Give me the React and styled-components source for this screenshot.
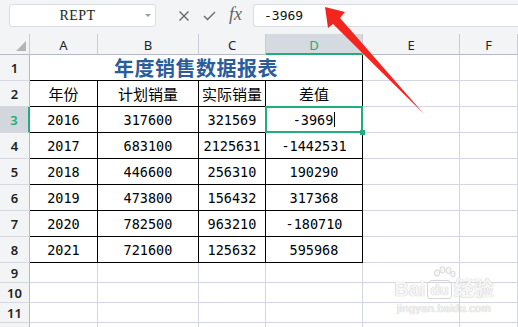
import React from "react";
import styled, { createGlobalStyle, css } from "styled-components";

const GlobalStyle = createGlobalStyle`
  html, body {
    margin: 0;
    padding: 0;
    background: #ffffff;
    overflow: hidden;
  }
`;

const Window = styled.div`
  position: relative;
  width: 518px;
  height: 327px;
  overflow: hidden;
  background: #ffffff;
  font-family: "DejaVu Sans Mono", "Noto Sans CJK SC", monospace;
`;

const Toolbar = styled.div`
  height: 34px;
  display: flex;
  align-items: flex-start;
  padding-top: 4px;
  box-sizing: border-box;
  background: #f3f4f6;
`;

const NameBox = styled.div`
  width: 147px;
  height: 23px;
  margin-left: 9px;
  box-sizing: border-box;
  border: 1px solid #dadde3;
  border-radius: 3px;
  background: #ffffff;
  display: flex;
  align-items: center;
`;

const NameText = styled.span`
  flex: 1;
  text-align: center;
  font-family: "Liberation Serif", "DejaVu Serif", serif;
  font-size: 14px;
  color: #222;
  letter-spacing: 0.5px;
`;

const Caret = styled.span`
  width: 0;
  height: 0;
  margin-right: 4px;
  border-left: 3px solid transparent;
  border-right: 3px solid transparent;
  border-top: 3px solid #9a9da5;
`;

const Actions = styled.div`
  width: 97px;
  height: 23px;
  display: flex;
  align-items: center;
  gap: 13px;
  padding-left: 22px;
  box-sizing: border-box;
`;

const Fx = styled.span`
  font-family: "Liberation Serif", "DejaVu Serif", serif;
  font-style: italic;
  font-size: 18px;
  color: #60646b;
  margin-top: -2px;
`;

const FormulaInput = styled.div`
  flex: 1;
  height: 23px;
  box-sizing: border-box;
  border: 1px solid #dadde3;
  border-right: none;
  border-radius: 3px 0 0 3px;
  background: #ffffff;
  padding-left: 10px;
  display: flex;
  align-items: center;
  font-size: 13px;
  color: #111;
`;

const Sheet = styled.div`
  display: grid;
  grid-template-columns: 30px 68px 101px 67px 97px 97px 1fr;
  grid-template-rows: 21px repeat(8, 26px) repeat(4, 20px);
`;

const Corner = styled.div`
  background: #f3f4f6;
  border-right: 1px solid #c9ccd6;
  border-bottom: 1px solid #b6bac6;
  position: relative;
  &::after {
    content: "";
    position: absolute;
    right: 3px;
    bottom: 3px;
    width: 0;
    height: 0;
    border-left: 10px solid transparent;
    border-bottom: 10px solid #b4b4b4;
  }
`;

const ColHead = styled.div`
  background: ${p => (p.active ? "#d5d9e0" : "#f3f4f6")};
  color: ${p => (p.active ? "#22ad79" : "#1f1f1f")};
  border-right: 1px solid #c9ccd6;
  border-bottom: ${p => (p.active ? "2px solid #22ad79" : "1px solid #b6bac6")};
  display: flex;
  align-items: center;
  justify-content: center;
  padding-top: 2px;
  font-family: "Noto Sans", "Liberation Sans", sans-serif;
  font-size: 13px;
  box-sizing: border-box;
`;

const RowHead = styled.div`
  background: ${p => (p.active ? "#d3d6dc" : "#f3f4f6")};
  color: ${p => (p.active ? "#22ad79" : "#1f1f1f")};
  border-right: ${p => (p.active ? "2px solid #22ad79" : "1px solid #b6bac6")};
  border-bottom: 1px solid #d6d9e3;
  display: flex;
  align-items: center;
  justify-content: center;
  font-family: "Noto Sans", "Liberation Sans", sans-serif;
  font-weight: 600;
  font-size: 13px;
  box-sizing: border-box;
`;

const Cell = styled.div`
  position: relative;
  border-right: 1px solid ${p => (p.edge ? "#000" : "#d3d6e2")};
  border-bottom: 1px solid ${p => (p.ruled ? "#000" : "#d3d6e2")};
  display: flex;
  align-items: center;
  justify-content: center;
  font-size: ${p => (p.label ? "15px" : "13.5px")};
  color: #000;
  white-space: nowrap;
  box-sizing: border-box;
  ${p =>
    p.selected &&
    css`
      &::after {
        content: "";
        position: absolute;
        left: -1px;
        top: -1px;
        right: -1px;
        bottom: -1px;
        border: 2px solid #22ad79;
      }
      &::before {
        content: "";
        position: absolute;
        right: -3px;
        bottom: -3px;
        width: 5px;
        height: 5px;
        background: #22ad79;
        z-index: 1;
      }
    `}
`;

const Title = styled(Cell)`
  grid-column: span 4;
  font-family: "Noto Sans CJK SC", sans-serif;
  font-weight: 700;
  font-size: 20px;
  color: #2b5c9c;
  letter-spacing: 0.5px;
`;

const Cursor = styled.span`
  display: inline-block;
  width: 1px;
  height: 15px;
  background: #000;
  margin-left: 1px;
`;

const Arrow = styled.svg`
  position: absolute;
  left: 0;
  top: 0;
  pointer-events: none;
`;

const Watermark = styled.div`
  position: absolute;
  left: 392px;
  top: 266px;
  width: 104px;
  display: flex;
  flex-direction: column;
  align-items: center;
  color: #f6f6f6;
  font-family: "Liberation Sans", "Noto Sans CJK SC", sans-serif;
  text-shadow: 0 0 1px #c8c8c8, 0 0 1px #c8c8c8;
  pointer-events: none;
`;

const Brand = styled.div`
  display: flex;
  align-items: flex-end;
  gap: 2px;
  font-size: 20px;
  font-weight: 700;
  line-height: 20px;
`;

const Du = styled.span`
  font-size: 15px;
  line-height: 15px;
  padding: 1px 2px;
  border: 1px solid #d6d6d6;
  border-radius: 5px 5px 3px 3px;
`;

const Site = styled.div`
  font-size: 11px;
  line-height: 13px;
  margin-top: 3px;
  letter-spacing: 0.3px;
`;

const columns = ["A", "B", "C", "D", "E", "F"];

const data = [
  ["2016", "317600", "321569", "-3969"],
  ["2017", "683100", "2125631", "-1442531"],
  ["2018", "446600", "256310", "190290"],
  ["2019", "473800", "156432", "317368"],
  ["2020", "782500", "963210", "-180710"],
  ["2021", "721600", "125632", "595968"]
];

export default function App() {
  return (
    <Window>
      <GlobalStyle />
      <Toolbar>
        <NameBox>
          <NameText>REPT</NameText>
          <Caret />
        </NameBox>
        <Actions>
          <svg width="12" height="12" viewBox="0 0 12 12">
            <path d="M1.5 1.5l9 9M10.5 1.5l-9 9" stroke="#61656c" strokeWidth="1.3" fill="none" />
          </svg>
          <svg width="13" height="10" viewBox="0 0 13 10">
            <path d="M1 5l3.5 3.5L12 1" stroke="#61656c" strokeWidth="1.3" fill="none" />
          </svg>
          <Fx>fx</Fx>
        </Actions>
        <FormulaInput>-3969</FormulaInput>
      </Toolbar>

      <Sheet>
        <Corner />
        {columns.map(c => (
          <ColHead key={c} active={c === "D"}>
            {c}
          </ColHead>
        ))}

        <RowHead>1</RowHead>
        <Title edge ruled>年度销售数据报表</Title>
        <Cell />
        <Cell />

        <RowHead>2</RowHead>
        <Cell label edge ruled>年份</Cell>
        <Cell label edge ruled>计划销量</Cell>
        <Cell label edge ruled>实际销量</Cell>
        <Cell label edge ruled>差值</Cell>
        <Cell />
        <Cell />

        {data.map((row, i) => (
          <React.Fragment key={row[0]}>
            <RowHead active={i === 0}>{i + 3}</RowHead>
            {row.map((v, j) => (
              <Cell key={j} edge ruled selected={i === 0 && j === 3}>
                {v}
                {i === 0 && j === 3 && <Cursor />}
              </Cell>
            ))}
            <Cell />
            <Cell />
          </React.Fragment>
        ))}

        {[9, 10, 11, 12].map(n => (
          <React.Fragment key={n}>
            <RowHead>{n < 12 ? n : ""}</RowHead>
            {columns.map(c => (
              <Cell key={c} />
            ))}
          </React.Fragment>
        ))}
      </Sheet>

      <Arrow width="518" height="327" viewBox="0 0 518 327">
        <polygon
          points="325,7 345,12 340,18 424,114 333,24 328,28"
          fill="#f2261f"
        />
      </Arrow>

      <Watermark>
        <svg width="24" height="13" viewBox="0 0 24 13">
          <g fill="#f6f6f6" stroke="#cfcfcf" strokeWidth="0.8">
            <ellipse cx="5" cy="7" rx="2.6" ry="3.2" />
            <ellipse cx="10.5" cy="4" rx="2.6" ry="3.2" />
            <ellipse cx="16.5" cy="4.5" rx="2.6" ry="3.2" />
            <ellipse cx="21" cy="8" rx="2.2" ry="2.8" />
          </g>
        </svg>
        <Brand>
          Bai<Du>du</Du>经验
        </Brand>
        <Site>jingyan.baidu.com</Site>
      </Watermark>
    </Window>
  );
}
